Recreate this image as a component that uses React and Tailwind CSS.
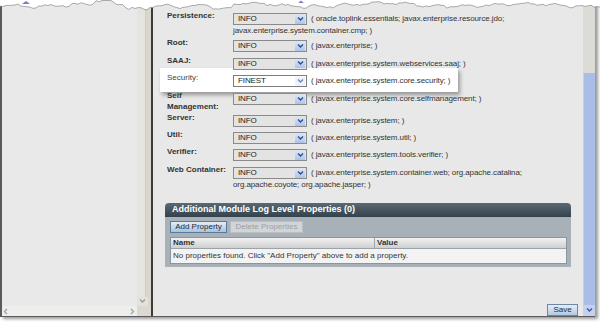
import React from 'react';

const font = "font-['Liberation_Sans',Arial,sans-serif]";

// jagged "torn paper" edge along the top of the screenshot
function tornEdge() {
  let seed = 7;
  const rnd = () => {
    seed = (seed * 9301 + 49297) % 233280;
    return seed / 233280;
  };
  const pts = [];
  for (let x = 0; x <= 600; x += 3) {
    let y = 5 + 1.6 * Math.sin(x * 0.045) + 1.2 * Math.sin(x * 0.21 + 1) + (rnd() - 0.5) * 2.2;
    if (x > 125 && x < 150) y += 4;
    if (x > 95 && x < 112) y -= 3;
    if (x > 212 && x < 232) y += 4;
    pts.push([x, Math.max(0.5, y).toFixed(1)]);
  }
  return pts;
}

const edge = tornEdge();

function Chevron({ dir = 'down', color = '#2c4f8f' }) {
  const d = {
    down: 'M1 1.5 L3.5 4 L6 1.5',
    left: 'M4 1 L1.5 3.5 L4 6',
    right: 'M2 1 L4.5 3.5 L2 6',
  }[dir];
  return (
    <svg width="7" height="7" viewBox="0 0 7 7">
      <path d={d} fill="none" stroke={color} strokeWidth="1.4" />
    </svg>
  );
}

function Select({ value, focus }) {
  return (
    <span
      className={
        focus
          ? 'flex h-[12px] w-[74px] shrink-0 items-center border border-[#7d7d7d] bg-white'
          : 'flex h-[12px] w-[74px] shrink-0 items-center border border-[#8a8a8a] bg-[#e3e3e3]'
      }
    >
      <span className="flex-1 pl-[4px] text-[8px] leading-none text-[#222]">{value}</span>
      <span
        className={
          focus
            ? 'mr-[1px] flex h-[9px] w-[10px] items-center justify-center bg-[#eef2fa]'
            : 'mr-[1px] flex h-[9px] w-[10px] items-center justify-center bg-gradient-to-b from-[#d9e4f7] to-[#aec3ea]'
        }
      >
        <Chevron color={focus ? '#6d84b3' : '#2c4f8f'} />
      </span>
    </span>
  );
}

const rows = [
  {
    label: 'Persistence:',
    value: 'INFO',
    text: '( oracle.toplink.essentials; javax.enterprise.resource.jdo;',
    more: 'javax.enterprise.system.container.cmp; )',
    h: 'h-[27px]',
  },
  { label: 'Root:', value: 'INFO', text: '( javax.enterprise; )', h: 'h-[17.5px]' },
  { label: 'SAAJ:', value: 'INFO', text: '( javax.enterprise.system.webservices.saaj; )', h: 'h-[17.5px]' },
  { label: 'Security:', value: 'FINEST', text: '( javax.enterprise.system.core.security; )', h: 'h-[18px]', focus: true },
  {
    label: 'Self',
    label2: 'Management:',
    value: 'INFO',
    text: '( javax.enterprise.system.core.selfmanagement; )',
    h: 'h-[22px]',
  },
  { label: 'Server:', value: 'INFO', text: '( javax.enterprise.system; )', h: 'h-[17px]' },
  { label: 'Util:', value: 'INFO', text: '( javax.enterprise.system.util; )', h: 'h-[17px]' },
  { label: 'Verifier:', value: 'INFO', text: '( javax.enterprise.system.tools.verifier; )', h: 'h-[18px]' },
  {
    label: 'Web Container:',
    value: 'INFO',
    text: '( javax.enterprise.system.container.web; org.apache.catalina;',
    more: 'org.apache.coyote; org.apache.jasper; )',
    h: 'h-[25px]',
  },
];

function Row({ row }) {
  return (
    <div className={`relative flex items-start ${row.h}`}>
      {row.focus && (
        <div className="absolute left-[-7px] top-[-5px] z-0 h-[24px] w-[298px] bg-white shadow-[2px_3px_4px_rgba(0,0,0,0.35)]" />
      )}
      <div className="relative z-10 w-[66px] shrink-0 text-[8px] font-bold leading-[10.5px] text-[#333]">
        <div className={row.focus ? 'font-normal text-[#444]' : ''}>{row.label}</div>
        {row.label2 && <div>{row.label2}</div>}
      </div>
      <div className="relative z-10 flex flex-col text-[8px] tracking-[-0.1px] text-[#333]">
        <div className="mt-[2px] flex h-[12px] items-center">
          <Select value={row.value} focus={row.focus} />
          <span className="ml-[4px] whitespace-nowrap leading-none">{row.text}</span>
        </div>
        {row.more && <div className="whitespace-nowrap leading-[11px]">{row.more}</div>}
      </div>
    </div>
  );
}

function PropertiesSection() {
  return (
    <div className="ml-[12px] mr-[12px] mt-[13px]">
      <div className="flex h-[14px] items-center rounded-t-[4px] bg-gradient-to-b from-[#5a6a74] to-[#33424c] pl-[7px]">
        <span className="text-[9px] font-bold text-white">Additional Module Log Level Properties (0)</span>
      </div>
      <div className="flex flex-col bg-[#a7b1b7] pb-[3px] pl-[5px] pr-[4px] pt-[4px]">
        <div className="flex gap-[3px]">
          <button className="flex h-[12px] w-[57px] items-center justify-center border border-[#5b7a98] bg-gradient-to-b from-[#e4edf7] to-[#a9c2dd] text-[8px] text-[#1d2b38]">
            Add Property
          </button>
          <button className="flex h-[12px] w-[73px] items-center justify-center border border-[#b9c0c5] bg-[#d1d5d8] text-[8px] text-[#9ba1a6]">
            Delete Properties
          </button>
        </div>
        <div className="mt-[4px] border border-[#8b959c] bg-[#f3f3f3]">
          <div className="flex h-[11px] border-b border-[#9aa3a9] bg-gradient-to-b from-[#f2f2f2] to-[#cfcfcf] text-[8px] font-bold text-[#333]">
            <div className="flex w-[204px] items-center border-r border-[#a3a3a3] pl-[2px]">Name</div>
            <div className="flex flex-1 items-center pl-[2px]">Value</div>
          </div>
          <div className="flex h-[14px] items-center pl-[2px] text-[8px] text-[#333]">
            No properties found. Click "Add Property" above to add a property.
          </div>
        </div>
      </div>
    </div>
  );
}

export default function App() {
  return (
    <div className={`relative h-[322px] w-[600px] overflow-hidden bg-white ${font}`}>
      <div className="flex h-[317px] w-[595px] border-b border-[#5c5c5c] shadow-[3px_2px_3px_rgba(0,0,0,0.4)]">
        {/* left tree panel */}
        <div className="flex w-[151px] shrink-0 flex-col border-l-[2px] border-[#5a5a5a]">
          <div className="flex flex-1">
            <div className="flex-1 bg-[#e9e9e9]" />
            <div className="flex w-[14px] flex-col bg-[#d9d6cd]">
              <div className="flex flex-1 flex-col">
                <div className="w-[9px] flex-1 border-r border-[#cfcbc1] bg-[#e6e4de]" />
              </div>
              <div className="flex h-[9px] w-[11px] items-center justify-center bg-[#e4e2dc]">
                <Chevron color="#9a9a9a" />
              </div>
            </div>
          </div>
          <div className="flex h-[10px]">
            <div className="flex flex-1 items-center justify-between bg-[#eeeeec] px-[1px]">
              <Chevron dir="left" color="#a4a4a4" />
              <Chevron dir="right" color="#a4a4a4" />
            </div>
            <div className="w-[14px] bg-[#dcd9d0]" />
          </div>
        </div>
        <div className="w-[2px] shrink-0 bg-[#3b3b3b]" />

        {/* right main panel */}
        <div className="flex flex-1 overflow-hidden bg-[#e8e8e8]">
          <div className="flex flex-1 flex-col overflow-hidden">
            <div className="flex flex-col pl-[14px] pt-[11px]">
              {rows.map((r) => (
                <Row key={r.label} row={r} />
              ))}
            </div>
            <PropertiesSection />
            <div className="ml-[6px] mr-[6px] mt-[31px] h-[1px] bg-[#c3cad1]" />
            <div className="mr-[5px] mt-[6px] flex justify-end">
              <button className="flex h-[12px] w-[31px] items-center justify-center border border-[#6d88a6] bg-gradient-to-b from-[#e4edf7] to-[#b4c9e2] text-[8px] text-[#1d2b38]">
                Save
              </button>
            </div>
          </div>
          <div className="flex w-[12px] shrink-0 flex-col bg-[#dcdbd6]">
            <div className="h-[73px]" />
            <div className="flex-1 border-l border-[#c9cfdc] bg-[#a9bde6]" />
            <div className="flex h-[11px] items-center justify-center bg-[#c4d2ee]">
              <Chevron color="#3c5a9a" />
            </div>
          </div>
        </div>
      </div>

      {/* torn top edge */}
      <svg className="absolute left-0 top-0" width="600" height="16" viewBox="0 0 600 16">
        <polygon
          points={`0,0 ${edge.map((p) => p.join(',')).join(' ')} 600,0`}
          fill="#ffffff"
        />
        <polyline points={edge.map((p) => p.join(',')).join(' ')} fill="none" stroke="#8a8a8a" strokeWidth="0.7" />
        <polygon points="22,4 26,1 30,4" fill="#6f7fc8" />
        <polygon points="298,3 301,0.5 304,3" fill="#7b87c9" />
      </svg>
    </div>
  );
}
